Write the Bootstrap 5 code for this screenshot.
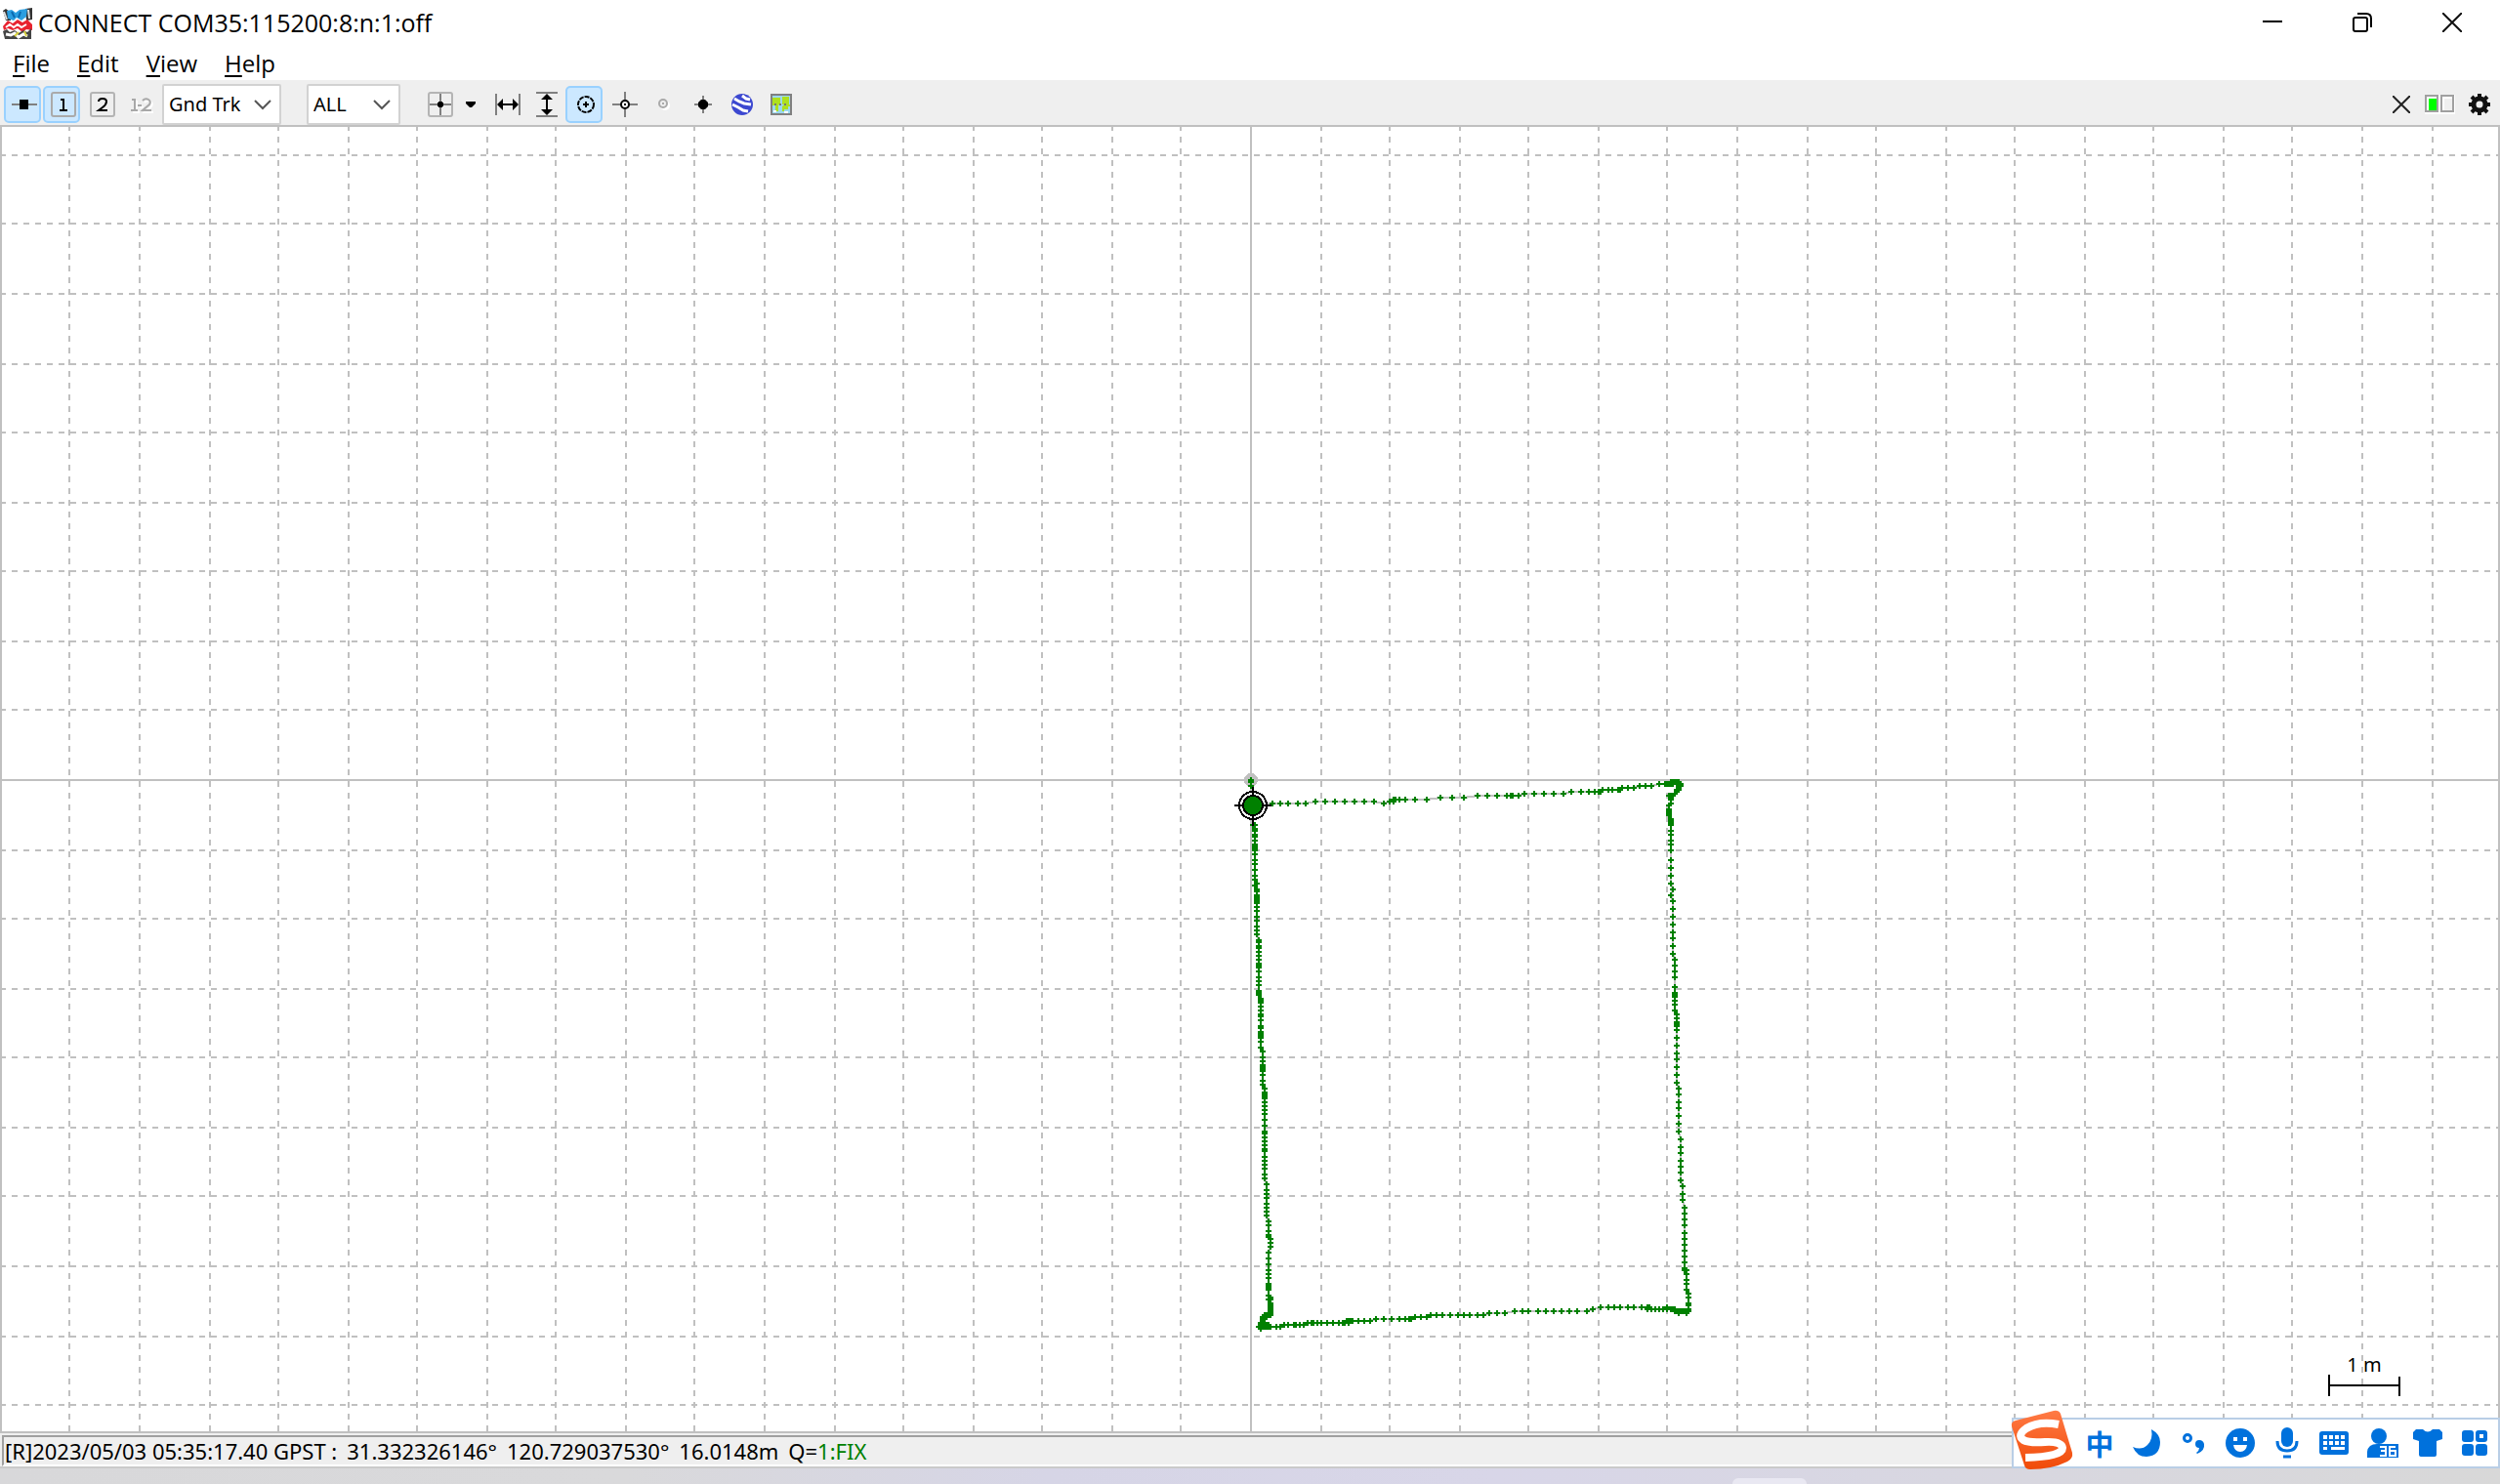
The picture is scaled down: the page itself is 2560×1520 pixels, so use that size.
<!DOCTYPE html>
<html lang="en">
<head>
<meta charset="utf-8">
<meta name="viewport" content="width=device-width, initial-scale=1">
<title>CONNECT COM35:115200:8:n:1:off</title>
<link href="https://cdn.jsdelivr.net/npm/bootstrap@5.3.0/dist/css/bootstrap.min.css" rel="stylesheet">
<style>
  body { font-family: "Noto Sans", "Noto Sans CJK SC", sans-serif; color: #000; background: #fff; overflow: hidden; }
  svg { display: block; }
  .titlebar { height: 48px; padding-left: 2px; padding-right: 3px; font-family: "Open Sans", sans-serif; }
  .titlebar h1 { font-size: 25px; line-height: 46px; font-weight: 400; margin: 0 0 0 5px; }
  .win-btn { width: 92px; height: 46px; padding: 0; border: 0; background: none; display: flex; align-items: center; justify-content: center; }
  .menubar { height: 34px; gap: 28px; padding-left: 13px; font-family: "Open Sans", sans-serif; font-size: 24px; line-height: 34px; }
  .menubar a { color: #000; text-decoration: none; }
  .menubar u { text-underline-offset: 3px; text-decoration-thickness: 2px; }
  .toolbar { height: 46px; background: #efefef; gap: 2px; padding: 4px 4px 0; }
  .tool { width: 38px; height: 38px; padding: 0 0 0 3px; border: 2px solid transparent; border-radius: 5px; background: none; display: flex; align-items: center; justify-content: center; }
  .tool.active { background: #cce8ff; border-color: #99d1ff; }
  .tool-slim { width: 24px; margin-right: 3px; padding: 0; }
  .pick { height: 42px; border: 2px solid #d2d2d2; border-radius: 2px; padding: 0 30px 0 5px; font-size: 20px; line-height: 36px; color: #000; background-color: #fff; background-position: right 8px center; background-size: 18px 12px;
    background-image: url("data:image/svg+xml,%3csvg xmlns='http://www.w3.org/2000/svg' viewBox='0 0 18 12'%3e%3cpath d='M1 2l8 8 8-8' fill='none' stroke='%23555' stroke-width='2'/%3e%3c/svg%3e"); }
  .pick-plot { width: 122px; margin: 0 24px 0 2px; }
  .pick-sol { width: 96px; margin-right: 18px; }
  .plot { min-height: 0; }
  .scale { right: 102px; bottom: 38px; width: 74px; font-size: 20px; line-height: 20px; text-align: center; }
  .statusbar { height: 36px; padding: 2px 2px 2px 2px; background: #efefef; border-bottom: 2px solid #cacaca; }
  .status-panel { height: 32px; width: 100%; gap: 10px; padding-left: 1px; border: 2px solid #a0a0a0; border-right: 0; border-bottom-color: #fff; font-size: 22px; line-height: 28px; white-space: nowrap; }
  .status-panel .fix { color: #008000; }
  .desktop { height: 16px; background: linear-gradient(90deg, #d8d8da 0, #d9d9db 25%, #d6d5e6 42%, #d8d6e8 60%, #d8d7e0 80%, #d8d8d8 100%); }
  .desktop-tab { left: 69.3%; bottom: 0; width: 76px; height: 6px; border-radius: 6px 6px 0 0; background: #e9e8f2; }
  .ime { right: 0; bottom: 16px; height: 52px; padding-left: 64px; background: #fff; border: 2px solid #b9cee6; color: #0071dc; }
  .ime button { width: 48px; height: 48px; padding: 0; border: 0; background: none; color: #0071dc; display: flex; align-items: center; justify-content: center; font: 700 29px/48px "Noto Sans CJK SC", sans-serif; }
  .ime-logo { left: -4px; bottom: -6px; }
</style>
<script src="https://cdn.jsdelivr.net/npm/bootstrap@5.3.0/dist/js/bootstrap.bundle.min.js"></script>
</head>
<body>
<div class="d-flex flex-column vh-100 position-relative">

  <header class="titlebar d-flex align-items-start">
    <svg class="mt-2" width="32" height="32" viewBox="0 0 32 32" aria-hidden="true">
      <path d="M1 3l3-2 4 3 1 9-5 0zM24 1l7-1v12l-6 1z" fill="#333"/><path d="M2 4l3 8M27 2l1 9" stroke="#ddd" stroke-width="2"/>
      <path d="M5 3l5-1 4 3 4-3 8-1-1 8-5 4-5-3-3 3-6-2z" fill="#2b9ee0"/><path d="M10 4l3 6M19 4l-2 6" stroke="#0a6ab0" stroke-width="2"/>
      <path d="M1 19l5-6 5 3 5-4 5 3 5-3 5 5v6l-6-1-4 3-5-4-5 2-5-2-4 2z" fill="#e8232f"/>
      <path d="M4 20l4-3 4 3 4-3 4 3 5-3" stroke="#fff" stroke-width="2" fill="none"/>
      <path d="M1 24l4-2 3 3 5-2 4 3 5-3 4 2 4-4v11H3z" fill="#444"/>
      <path d="M4 27l5 1 4-2 4 4 5-3 4 2" stroke="#fff" stroke-width="3" fill="none"/><path d="M13 29l4-4M23 24l2 5" stroke="#d8d23c" stroke-width="2"/>
    </svg>
    <h1 class="flex-grow-1">CONNECT COM35:115200:8:n:1:off</h1>
    <button class="win-btn" aria-label="Minimize"><svg width="20" height="20"><path d="M0 9h20" stroke="#000" stroke-width="2"/></svg></button>
    <button class="win-btn" aria-label="Restore"><svg width="20" height="20" fill="none" stroke="#000" stroke-width="2"><rect x="1" y="5" width="14" height="14" rx="2"/><path d="M5 1h9q5 0 5 5v9"/></svg></button>
    <button class="win-btn" aria-label="Close"><svg width="20" height="20"><path d="M0 0l20 20M20 0L0 20" stroke="#111" stroke-width="2"/></svg></button>
  </header>

  <nav class="menubar d-flex">
    <a href="#"><u>F</u>ile</a>
    <a href="#"><u>E</u>dit</a>
    <a href="#"><u>V</u>iew</a>
    <a href="#"><u>H</u>elp</a>
  </nav>

  <div class="toolbar d-flex align-items-center" role="toolbar" aria-label="Plot tools">
    <button class="tool active" aria-label="Connect"><svg width="26" height="26"><path d="M0 13h26" stroke="#808080" stroke-width="2"/><rect x="8" y="8" width="9" height="10"/></svg></button>
    <button class="tool active" aria-label="Solution 1"><svg width="26" height="26" fill="none"><rect x="1" y="1" width="24" height="24" rx="2" stroke="#aaa" stroke-width="2"/><path d="M10 8h3v11M9 19h8" stroke="#000" stroke-width="2"/></svg></button>
    <button class="tool" aria-label="Solution 2"><svg width="26" height="26" fill="none"><rect x="1" y="1" width="24" height="24" rx="2" stroke="#b4b4b4" stroke-width="2"/><path d="M9 10q0-3 4-3t4 3q0 3-4 6l-4 3h9" stroke="#000" stroke-width="2"/></svg></button>
    <button class="tool" aria-label="Solution 1-2"><svg width="26" height="26" fill="none"><path d="M3 8h3v11M2 19h7M9 14h4M14 9q3-3 6-1t1 5l-7 6h9" stroke="#fff" stroke-width="2" transform="translate(2 2)"/><path d="M3 8h3v11M2 19h7M9 14h4M14 9q3-3 6-1t1 5l-7 6h9" stroke="#a8a8a8" stroke-width="2"/></svg></button>
    <select class="form-select pick pick-plot" aria-label="Plot type"><option>Gnd Trk</option></select>
    <select class="form-select pick pick-sol" aria-label="Solution status"><option>ALL</option></select>
    <button class="tool" aria-label="Center on origin"><svg width="26" height="26" fill="none" stroke="#808080" stroke-width="2"><rect x="1" y="1" width="24" height="24" rx="2" stroke="#b4b4b4"/><path d="M13 2v22M2 13h22"/><path d="M11 10h4v1h1v4h-1v1h-4v-1h-1v-4h1z" fill="#000" stroke="none"/></svg></button>
    <button class="tool tool-slim" aria-label="More"><svg width="10" height="6"><path d="M0 0h10v2L6 6H4L0 2z"/></svg></button>
    <button class="tool" aria-label="Fit horizontal"><svg width="26" height="22"><path d="M1 0v22M25 0v22" stroke="#808080" stroke-width="2"/><path d="M3 11h20" stroke="#000" stroke-width="2"/><path d="M2 11l6-6v12zM24 11l-6-6v12z"/></svg></button>
    <button class="tool" aria-label="Fit vertical"><svg width="22" height="26"><path d="M0 1h22M0 25h22" stroke="#808080" stroke-width="2"/><path d="M11 3v20" stroke="#000" stroke-width="2"/><path d="M11 2l6 6H5zM11 24l6-6H5z"/></svg></button>
    <button class="tool active" aria-label="Track center"><svg width="20" height="20"><circle cx="10" cy="10" r="8" fill="none" stroke="#000" stroke-width="2" stroke-dasharray="5 1"/><path d="M9 7h2v2h2v2h-2v2H9v-2H7V9h2z"/></svg></button>
    <button class="tool" aria-label="Fix center"><svg width="26" height="26"><path d="M13 0v26M0 13h26" stroke="#808080" stroke-width="2"/><circle cx="13" cy="13" r="4" fill="#fff" stroke="#000" stroke-width="2"/><rect x="12" y="12" width="2" height="2"/></svg></button>
    <button class="tool" aria-label="Fix horizontal"><svg width="14" height="14"><circle cx="8" cy="8" r="5" fill="#fff"/><circle cx="6" cy="6" r="4" fill="#efefef" stroke="#aaa" stroke-width="2"/><rect x="5" y="5" width="2" height="2" fill="#aaa"/></svg></button>
    <button class="tool" aria-label="Show marks"><svg width="18" height="18"><path d="M9 0v18M0 9h18" stroke="#808080" stroke-width="2"/><path d="M7 4h4l3 3v4l-3 3H7l-3-3V7z"/></svg></button>
    <button class="tool" aria-label="Google Earth view"><svg width="22" height="22"><circle cx="11" cy="11" r="11" fill="#3c48d0"/><path d="M3 5l5 3 5 2 7 1M1 11l6 3 5 3 5 1M11 2l4 3 4 1" stroke="#fff" stroke-width="3" fill="none"/></svg></button>
    <button class="tool" aria-label="Map view"><svg width="22" height="22"><rect x="1" y="1" width="20" height="20" fill="#9cd8ee" stroke="#808080" stroke-width="2"/><path d="M2 4h8v6l-2 2v6H5v-6H2zM12 3h7v8h4v0h-3v2h-2v3h-4v2h-2v-5l2-2h-2z" fill="#aee01e"/><path d="M3 18h3M14 19h4" stroke="#fff" stroke-width="2"/><path d="M4 11h15" stroke="#777" stroke-width="2" stroke-dasharray="2 3"/></svg></button>

    <button class="tool ms-auto" aria-label="Clear"><svg width="18" height="18"><path d="M0 0l18 18M18 0L0 18" stroke="#222" stroke-width="2"/></svg></button>
    <button class="tool" aria-label="Stream status"><svg width="32" height="20"><path d="M0 0h32v20H0z" fill="#fff"/><g stroke="#a0a0a0" stroke-width="2" fill="#fff"><rect x="1" y="1" width="12" height="16"/><rect x="17" y="1" width="12" height="16"/></g><path d="M4 4h8v12H4z" fill="#0f0"/><path d="M20 4h8v12h-8z" fill="#efefef"/></svg></button>
    <button class="tool" aria-label="Options"><svg width="22" height="22" viewBox="-11 -11 22 22"><g stroke="#111" stroke-width="4"><path d="M0-11v22M-11 0h22M-8-8L8 8M8-8L-8 8"/></g><circle r="6" fill="#efefef" stroke="#111" stroke-width="5"/></svg></button>
  </div>

  <main class="plot flex-grow-1 position-relative">
    <svg id="track" class="position-absolute top-0 start-0 w-100 h-100" shape-rendering="crispEdges" role="img" aria-label="Ground track"></svg>
    <div class="scale position-absolute">1 m
      <svg width="74" height="22" shape-rendering="crispEdges"><path d="M1 0v22M73 2v20M1 11h72" stroke="#000" stroke-width="2"/></svg>
    </div>
  </main>

  <footer class="statusbar">
    <div class="status-panel d-flex">
      <span>[R]2023/05/03 05:35:17.40 GPST :</span>
      <span>31.332326146°</span>
      <span>120.729037530°</span>
      <span>16.0148m</span>
      <span>Q=<span class="fix">1:FIX</span></span>
    </div>
  </footer>
  <div class="desktop position-relative"><div class="desktop-tab position-absolute"></div></div>

  <div class="ime position-absolute d-flex align-items-center">
    <svg class="ime-logo position-absolute" width="66" height="64" viewBox="0 0 66 64">
      <defs><linearGradient id="flame" x2="0" y2="1"><stop stop-color="#ff7a45"/><stop offset="1" stop-color="#f04a08"/></linearGradient></defs>
      <path d="M6 11L45 1q5-1 7 3l12 40q1 6-5 9-16 8-38 8-5 0-6-4L2 17q-1-5 4-6z" fill="url(#flame)"/>
      <path d="M50 15Q30 11 17 19 7 26 14 31q5 3 22 2 17-1 18 6 0 9-38 10" fill="none" stroke="#fff" stroke-width="8"/>
    </svg>
    <button aria-label="Input language">中</button>
    <button aria-label="Half width"><svg width="28" height="28"><path d="M19 0q9 5 9 13 0 14-14 15Q4 28 0 18q9 4 15-2t4-16z" fill="currentColor"/></svg></button>
    <button aria-label="Punctuation"><svg width="24" height="24"><circle cx="6" cy="7" r="3.5" fill="none" stroke="currentColor" stroke-width="3"/><path d="M14 13q0-4 4-4t5 4q1 7-7 10l-1-1q3-2 3-5-4 0-4-4z" fill="currentColor"/></svg></button>
    <button aria-label="Emoji"><svg width="30" height="30"><circle cx="15" cy="15" r="15" fill="currentColor"/><path d="M8 9h4v4H8zM18 9h4v4h-4zM8 17h14q-1 7-7 7t-7-7z" fill="#fff"/></svg></button>
    <button aria-label="Voice"><svg width="24" height="32" fill="none" stroke="currentColor" stroke-width="3"><rect x="6" y="0" width="12" height="20" rx="6" fill="currentColor" stroke="none"/><path d="M2 14q0 10 10 10t10-10M8 30h8"/></svg></button>
    <button aria-label="Keyboard"><svg width="30" height="24"><rect width="30" height="24" rx="3" fill="currentColor"/><path d="M4 4h4v4H4zM10 4h4v4h-4zM16 4h4v4h-4zM22 4h4v4h-4zM4 10h4v4H4zM10 10h4v4h-4zM16 10h4v4h-4zM22 10h4v4h-4zM4 16h4v3H4zM12 16h14v3H12z" fill="#fff"/></svg></button>
    <button class="ps-1" aria-label="Account"><svg width="32" height="30"><circle cx="12" cy="8" r="8" fill="currentColor"/><path d="M0 30V24q1-8 10-8h22v14z" fill="currentColor"/><path d="M13 19h6v9h-6M14 23h5M29 19h-6v9h6v-5h-6" stroke="#fff" stroke-width="2" fill="none"/></svg></button>
    <button aria-label="Skin"><svg width="30" height="28"><path d="M3 0h7q5 5 10 0h7l3 3v7l-6 2v14q0 2-2 2H8q-2 0-2-2V12l-6-2V3z" fill="currentColor"/></svg></button>
    <button aria-label="Toolbox"><svg width="26" height="26" fill="currentColor"><rect width="12" height="12" rx="3"/><rect x="14" width="12" height="12" rx="3"/><rect y="14" width="12" height="12" rx="3"/><rect x="14" y="14" width="12" height="12" rx="3"/><path d="M18 4h4v4h-4z" fill="#fff"/></svg></button>
  </div>
</div>

<script>
// Each run shares one coordinate: "h" runs list x positions on a row, "v" runs list y positions in a column.
// Units are plot cells of 2px, measured from the origin.
const runs = [
  ['v',0,'0 1 3'],
  ['v',1,'10 13 23'],
  ['v',2,'23 25 26 28 29 31 33 34 35 36 38 41 43 46 49 51 54'],
  ['v',3,'53 56 57 59 60 61 62 63 65 67 70 72 75 77 79'],
  ['v',4,'82 83 85 86 88 90 92 94 95 96 98 101 103 105 108 109 110'],
  ['v',5,'112 113 114 116 118 120 121 123 126 127 129 130 131 132 134 137'],
  ['v',6,'139 142 144 146 147 148 149 151 154 156'],
  ['v',7,'158 160 161 162 163 165 167 169 171 174 177 180 181 183 185 187 189 190 193 195 197 199 202 204'],
  ['v',8,'207 210 212 214 217 219 221 223'],
  ['v',9,'226 228 231 233 234'],['v',10,'235 237 239'],
  ['v',9,'242 245 248 251 253 255 258 259 260 261 264 266'],
  ['v',10,'265 266 268 269 270 271 272 273 274'],
  ['h',274,'9 8 7'],['h',275,'8 7 6'],['h',276,'7 6'],['h',277,'6'],['h',278,'6 5'],['h',279,'5 6 8 9'],['h',280,'4 5 6 7 8 9 10'],['h',281,'5'],
  ['h',280,'10 13 15'],['h',279,'17 19 22 23 25 27'],
  ['h',278,'29 31 32 34 36 39 42 45 47 48 50'],['h',277,'49 50 51 52 55 58 61'],['h',276,'64 68 72 76 79 81 82'],
  ['h',275,'84 87 90'],['h',274,'92 95 98 102 106 109 112 116 119'],['h',273,'122 126 130'],
  ['h',272,'135 139 142 147 151 155 159 163 167 172'],['h',271,'175'],['h',270,'179 183 186 189 193 196 200 203 204'],
  ['h',271,'203 205 207 209 211'],['h',270,'213'],['h',271,'213 215 216 217'],['h',272,'217 218 219 220 221 222 223 224'],['h',273,'219 223'],
  ['v',224,'272 271 269 268 265 263'],['v',223,'261 258 256 253 251'],
  ['v',222,'251 250 247 244 241 238 235 232 228 225 222 219'],['v',221,'215 212 208'],
  ['v',220,'205 201 198 195 191 188 184'],['v',219,'180 176 172 168 165 161 158'],
  ['v',218,'155 151 147 143 140 136 132 128 126 125 124 122 120'],
  ['v',217,'118 115 113 111 110 109 106 101 98 95 92'],['v',216,'89 85 81 78 74 70 66 62'],['v',215,'59'],['v',216,'56'],
  ['v',215,'53 49 45 41 36 33 31 28 26 23 22 21 20'],['v',214,'18 17 16 15 13'],['v',215,'12 10 9'],['v',214,'8'],
  ['h',8,'215'],['h',7,'217'],['h',6,'218'],['h',5,'218 219'],['h',4,'219'],['h',3,'220'],['h',2,'220 219 218'],['h',1,'219 218 217 216 215'],['h',2,'216 215 214 213 212 209'],
  ['h',3,'205 202 199'],['h',4,'196 193 190'],['h',5,'189 188 185 183 180'],['h',6,'179 178 176 173 169 164'],
  ['h',7,'160 155 150 145 140'],['h',8,'137 134 133 131 126 121 116'],['h',9,'109 103 97'],
  ['h',10,'90 84 79 76 74 73'],['h',11,'73 71'],['h',12,'68'],['h',11,'63 58 53 48 43 38 33'],['h',12,'28 24 19 15 11 1']
];
const points = runs.flatMap(([dir, at, list]) => list.split(' ').map(n => dir === 'h' ? [+n, at] : [at, +n]));
const METRE = 35.565;

function draw() {
  const svg = document.getElementById('track');
  const w = svg.clientWidth, h = svg.clientHeight;
  const cx = 2 * Math.round(w / 4) + 1, cy = 2 * Math.round(h / 4) + 1;
  let dashV = '', dashH = '';
  for (let k = 1; k * METRE * 2 < w; k++) {
    const d = 2 * Math.round(k * METRE);
    dashV += `M${cx - d} 0V${h}M${cx + d} 0V${h}`;
    dashH += `M0 ${cy - d}H${w}M0 ${cy + d}H${w}`;
  }
  const line = points.map(p => (cx + 2 * p[0]) + ',' + (cy + 2 * p[1])).join(' ');
  const marks = points.map(p => {
    const x = cx + 2 * p[0], y = cy + 2 * p[1];
    return `M${x - 3} ${y}h6M${x} ${y - 3}v6`;
  }).join('');
  const mx = cx + 2, my = cy + 26;
  svg.innerHTML = `
    <g stroke="#c0c0c0" stroke-width="2" fill="none">
      <path d="${dashV}${dashH}" stroke-dasharray="6 6"/>
      <path d="M${cx} 0V${h}M0 ${cy}H${w}"/>
      <rect x="1" y="1" width="${w - 2}" height="${h - 2}"/>
      <polyline points="${line}"/>
    </g>
    <circle cx="${cx}" cy="${cy}" r="7" fill="#c0c0c0"/>
    <path d="${marks}" stroke="#008000" stroke-width="2"/>
    <circle cx="${mx}" cy="${my}" r="14" fill="#fff" stroke="#000" stroke-width="2"/>
    <circle cx="${mx}" cy="${my}" r="10" fill="#008000" stroke="#000" stroke-width="2"/>
    <path d="M${mx - 19} ${my}h10M${mx + 9} ${my}h10M${mx} ${my - 19}v10M${mx} ${my + 9}v12" stroke="#000" stroke-width="2"/>`;
}
draw();
addEventListener('resize', draw);
</script>
</body>
</html>
